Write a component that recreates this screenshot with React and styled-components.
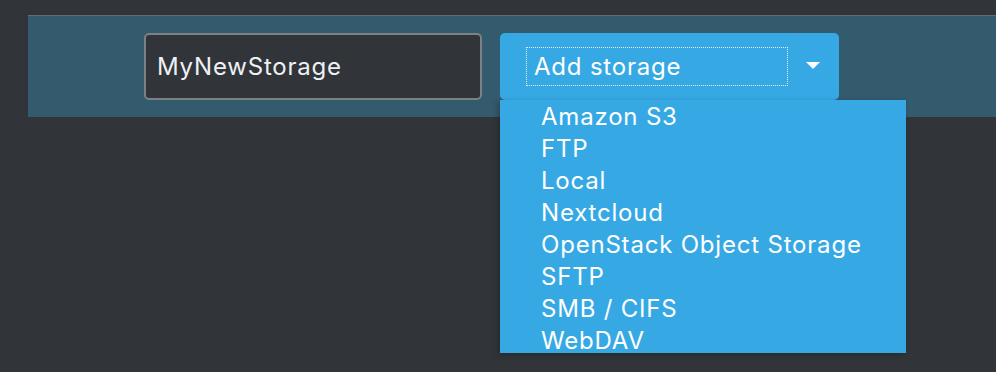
import React from "react";
import styled, { createGlobalStyle } from "styled-components";

const GlobalStyle = createGlobalStyle`
  html, body {
    margin: 0;
    padding: 0;
    background: #313539;
    font-family: Inter, "Open Sans", "Liberation Sans", sans-serif;
  }
`;

const storages = [
  "Amazon S3",
  "FTP",
  "Local",
  "Nextcloud",
  "OpenStack Object Storage",
  "SFTP",
  "SMB / CIFS",
  "WebDAV",
];

const Page = styled.div`
  width: 996px;
  height: 372px;
  overflow: hidden;
  padding-top: 15px;
  box-sizing: border-box;
`;

const Band = styled.div`
  margin-left: 28px;
  height: 102px;
  box-sizing: border-box;
  background: #345a6e;
  border-top: 1px solid #5f6d75;
  display: flex;
  align-items: center;
  gap: 18px;
  padding-left: 116px;
  padding-bottom: 1px;
`;

const NameInput = styled.input`
  width: 338px;
  height: 67px;
  box-sizing: border-box;
  background: #313539;
  border: 2px solid #7b8185;
  border-radius: 5px;
  color: #eef1f4;
  font-family: inherit;
  font-size: 24px;
  letter-spacing: 0.8px;
  padding: 0 11px;
  outline: none;
`;

const SelectWrap = styled.div`
  position: relative;
`;

const SelectButton = styled.div`
  width: 339px;
  height: 67px;
  box-sizing: border-box;
  background: #36a9e4;
  border-radius: 5px;
  display: flex;
  align-items: center;
  padding-left: 26px;
  padding-right: 18px;
  color: #fff;
  font-size: 24px;
  letter-spacing: 0.8px;
`;

const FocusRing = styled.div`
  width: 262px;
  height: 39px;
  box-sizing: border-box;
  border: 1px dotted rgba(255, 255, 255, 0.85);
  display: flex;
  align-items: center;
  padding-left: 7px;
`;

const Caret = styled.svg`
  margin-left: auto;
  margin-right: 1px;
`;

const Menu = styled.ul`
  position: absolute;
  top: 67px;
  left: 0;
  width: 406px;
  height: 253px;
  box-sizing: border-box;
  margin: 0;
  padding: 1px 0 0 41px;
  list-style: none;
  background: #36a9e4;
  box-shadow: -2px 2px 6px rgba(0, 0, 0, 0.25);
`;

const MenuItem = styled.li`
  height: 32px;
  line-height: 32px;
  color: #fff;
  font-size: 24px;
  letter-spacing: 0.8px;
  white-space: nowrap;
`;

export default function App() {
  return (
    <>
      <GlobalStyle />
      <Page>
        <Band>
          <NameInput defaultValue="MyNewStorage" />
          <SelectWrap>
            <SelectButton>
              <FocusRing>Add storage</FocusRing>
              <Caret width="14" height="8" viewBox="0 0 14 8">
                <path d="M0 0 H14 L7 7 Z" fill="#fff" />
              </Caret>
            </SelectButton>
            <Menu>
              {storages.map((s) => (
                <MenuItem key={s}>{s}</MenuItem>
              ))}
            </Menu>
          </SelectWrap>
        </Band>
      </Page>
    </>
  );
}
